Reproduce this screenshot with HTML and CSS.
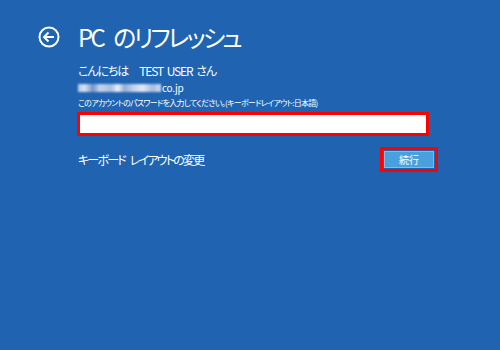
FILE: index.html
```html
<!DOCTYPE html>
<html lang="ja">
<head>
    <meta charset="UTF-8">
    <title>PC のリフレッシュ</title>
    <link rel="stylesheet" href="styles.css">
</head>
<body>
    <div class="screen">
        <header class="head">
            <svg class="back" width="22" height="22" viewBox="0 0 22 22">
                <circle cx="11" cy="11" r="9.5" fill="none" stroke="#fff" stroke-width="2"/>
                <path d="M6 11 H16 M10.5 6.5 L6 11 L10.5 15.5" fill="none" stroke="#fff" stroke-width="2"/>
            </svg>
            <h1>PC のリフレッシュ</h1>
        </header>

        <div class="panel">
            <p class="greet">こんにちは　TEST USER さん</p>
            <p class="mail"><span class="blur"></span>co.jp</p>
            <label class="hint" for="pw">このアカウントのパスワードを入力してください。(キーボードレイアウト:日本語)</label>
            <div class="mark field-mark">
                <input type="password" id="pw">
            </div>
            <div class="row">
                <span class="link">キーボード レイアウトの変更</span>
                <span class="mark btn-mark"><button type="button">続行</button></span>
            </div>
        </div>
    </div>
</body>
</html>
```

FILE: styles.css
```css
body {
    margin: 0;
    background-color: #2064b1;
    font-family: "Noto Sans CJK JP", "Noto Sans", sans-serif;
    font-feature-settings: "palt";
    color: #fff;
}
.screen {
    width: 500px;
    height: 350px;
    padding-top: 22px;
    box-sizing: border-box;
}
.head {
    display: flex;
    align-items: center;
    padding-left: 38px;
    height: 30px;
}
.back {
    margin-right: 18px;
}
h1 {
    margin: 0;
    font-size: 24px;
    font-weight: normal;
    line-height: 30px;
    letter-spacing: -2.6px;
    word-spacing: 7px;
}
.panel {
    margin-left: 78px;
    width: 360px;
}
.greet {
    margin: 12px 0 0;
    font-size: 12px;
    line-height: 14px;
    letter-spacing: -1.1px;
    word-spacing: 2px;
}
.mail {
    margin: 4px 0 0;
    font-size: 10px;
    line-height: 12px;
    letter-spacing: -0.3px;
    display: flex;
    align-items: center;
}
.blur {
    display: inline-block;
    width: 83px;
    height: 8px;
    margin-right: 1px;
    background: linear-gradient(90deg, #b7c8e4 0%, #d9e3f2 8%, #9cb4da 14%, #6f93c9 18%, #c8d6ec 26%, #a9bfe0 40%, #eef2f9 48%, #93aed8 56%, #c0d0ea 66%, #e2e9f5 78%, #a4bbdf 90%, #d1ddef 100%);
    filter: blur(0.8px);
}
.hint {
    display: block;
    margin-top: 4px;
    font-size: 8px;
    line-height: 10px;
    letter-spacing: -0.7px;
    white-space: nowrap;
}
.mark {
    border: 3px solid #f00;
    box-sizing: border-box;
}
.field-mark {
    margin: 4px 0 0 -1px;
    width: 352px;
    height: 24px;
}
.field-mark input {
    display: block;
    width: 100%;
    height: 100%;
    border: none;
    padding: 0;
    box-sizing: border-box;
    background-color: #fff;
}
.row {
    margin-top: 11px;
    display: flex;
    justify-content: space-between;
    align-items: center;
    height: 25px;
}
.link {
    font-size: 12px;
    line-height: 14px;
    letter-spacing: -1.8px;
    word-spacing: 4px;
    margin-top: 1px;
}
.btn-mark {
    display: block;
    width: 58px;
    height: 25px;
    padding: 1px;
}
.btn-mark button {
    display: block;
    width: 100%;
    height: 100%;
    border: 1px solid #7cbce9;
    background-color: #4aa0dc;
    color: #fff;
    font-family: inherit;
    font-size: 10px;
    padding: 0;
}
```
